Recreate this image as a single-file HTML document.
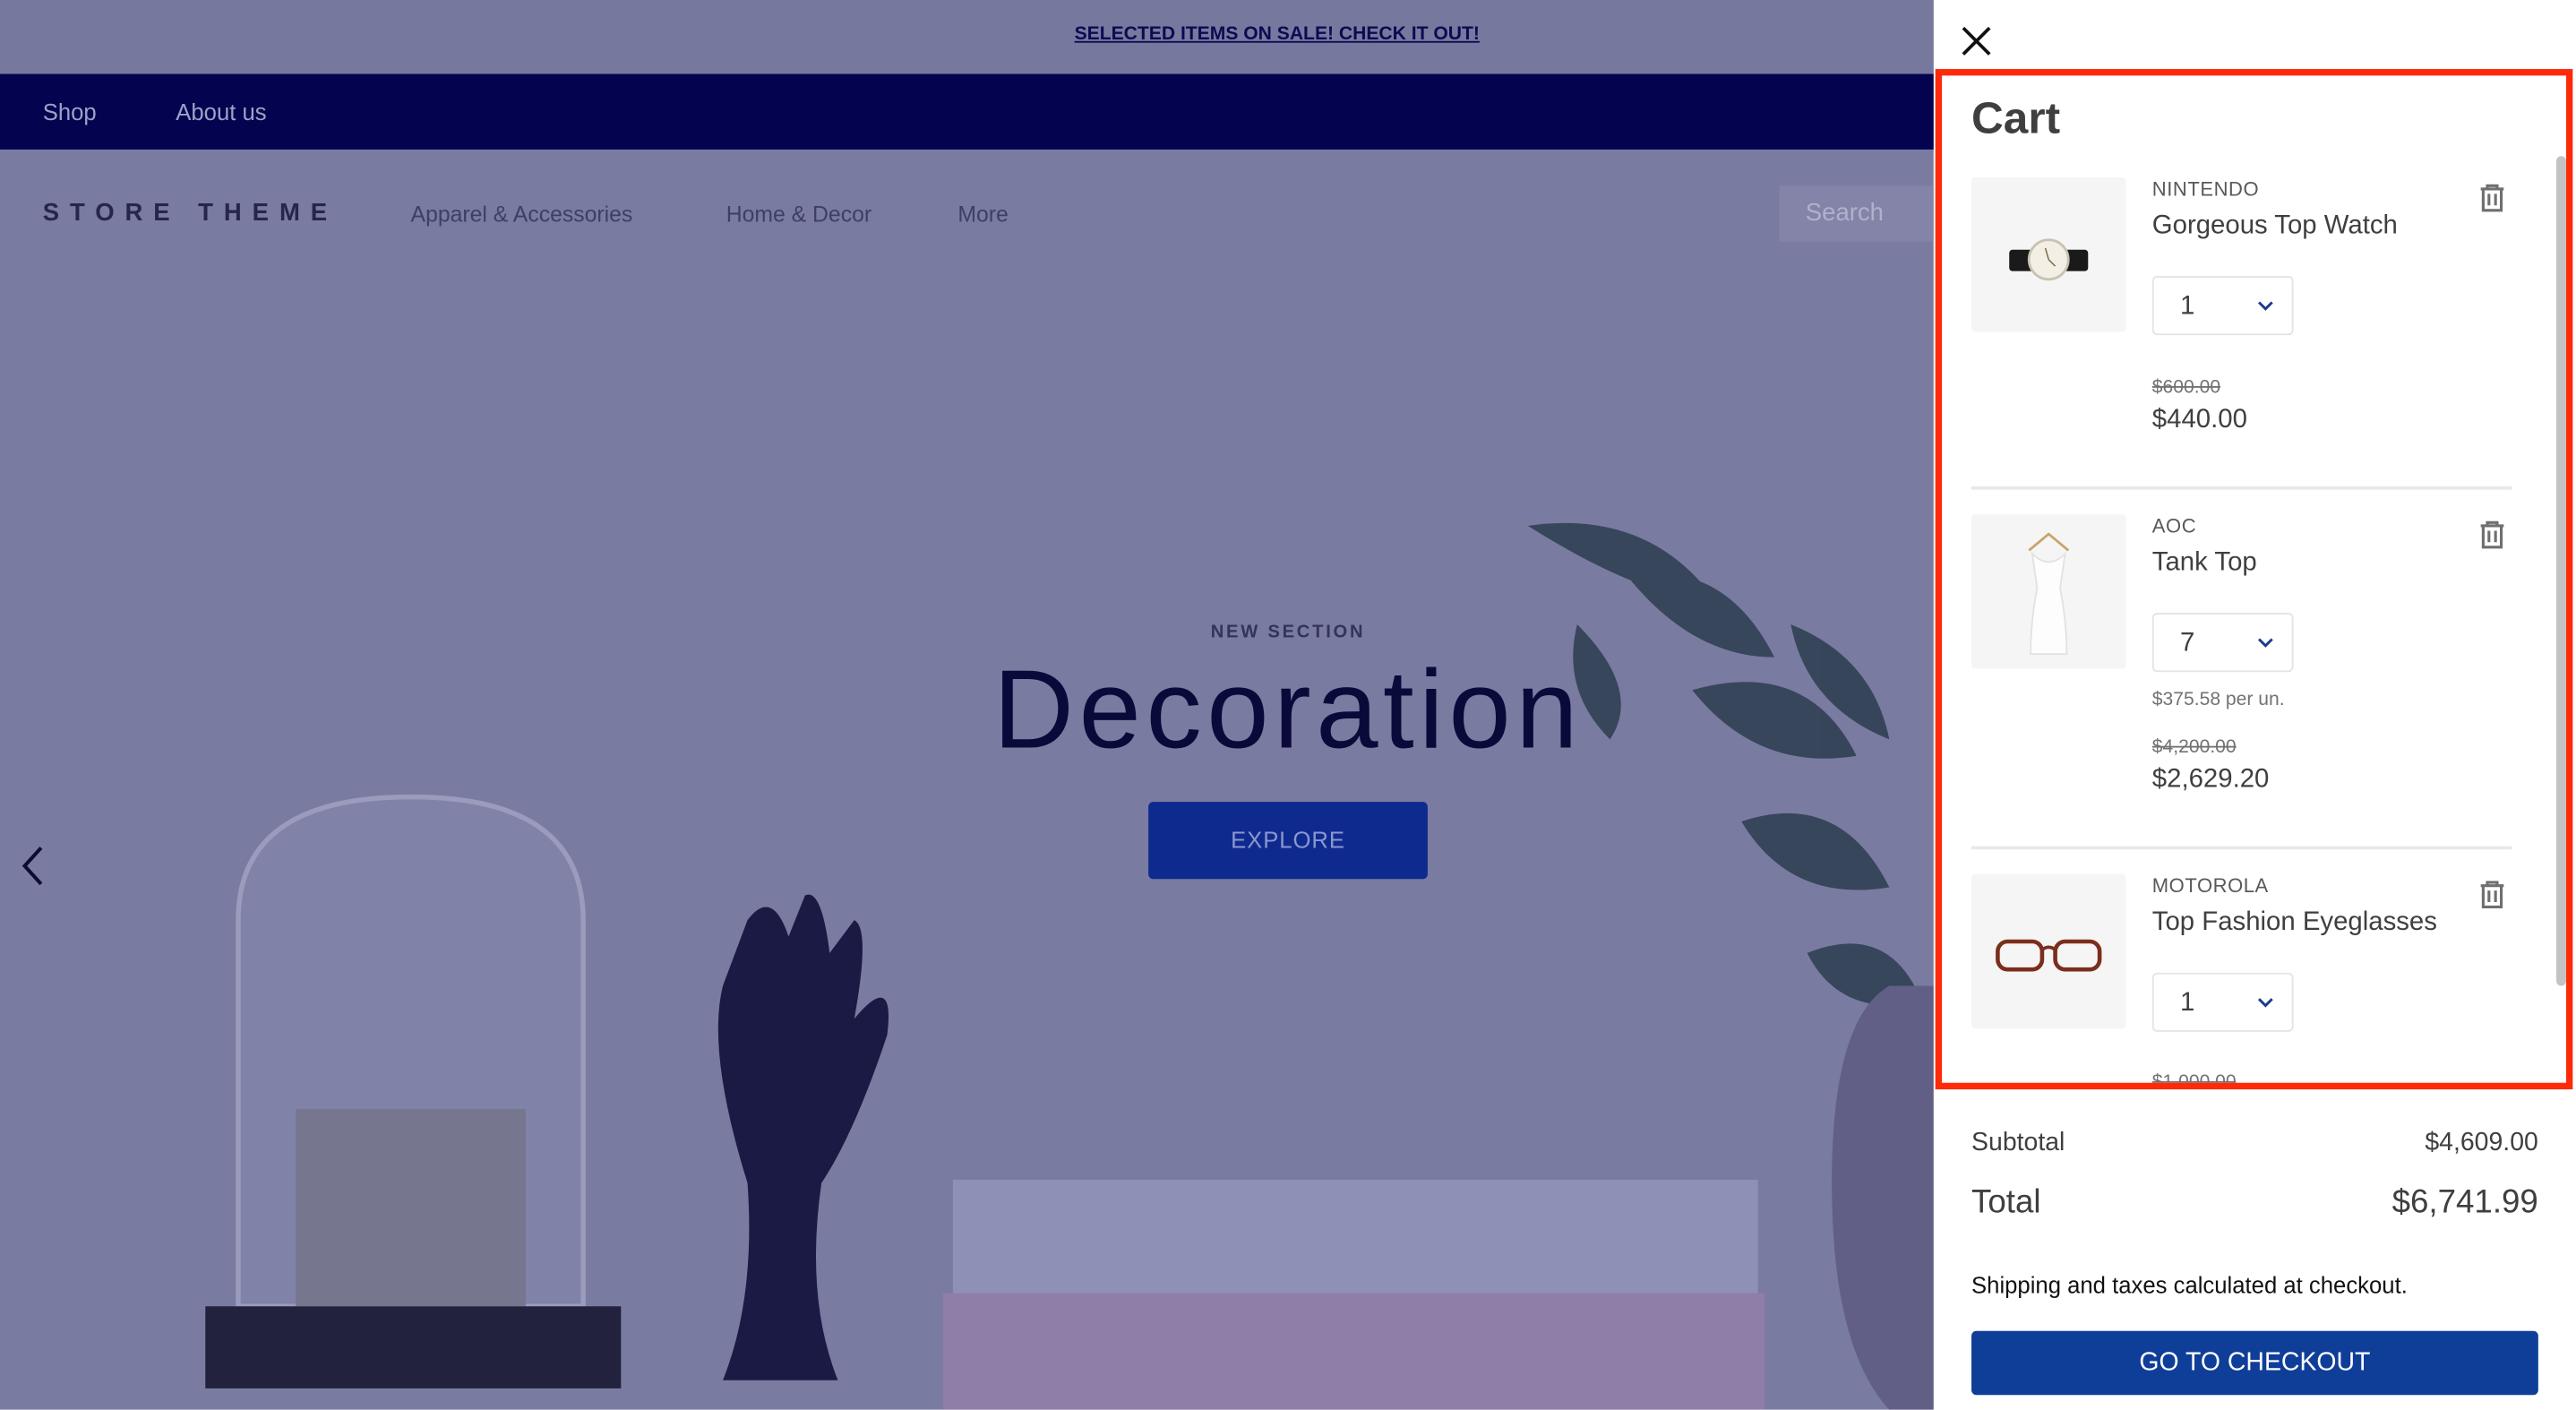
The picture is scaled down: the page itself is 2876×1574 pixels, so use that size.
<!DOCTYPE html>
<html><head><meta charset="utf-8"><style>
html,body{margin:0;padding:0;width:2876px;height:1574px;overflow:hidden;background:#fff}
#w{width:1568px;height:858px;transform:scale(1.8342);transform-origin:0 0;position:relative;font-family:"Liberation Sans",sans-serif;overflow:hidden}
.a{position:absolute}
.cart{color:#3f3f40}
.brand{font-size:12px;color:#595959;letter-spacing:.3px}
.name{font-size:16px;color:#3f3f40}
.qty{width:86px;height:36px;border:1.5px solid #e3e4e6;border-radius:3px;box-sizing:border-box;font-size:16px;color:#3f3f40}
.thumb{width:94px;height:94px;background:#f5f5f5;border-radius:2px}
.old{font-size:11.5px;color:#727273;text-decoration:line-through}
.price{font-size:16px;color:#3f3f40}
</style></head><body><div id="w">
<div class="a" style="left:0;top:0;width:1177px;height:858px;background:#7a7ba1"></div>
<div class="a" style="left:0;top:0;width:1177px;height:45px;background:#77789e"></div>
<div class="a" style="left:654px;top:15px;font-size:11.5px;font-weight:bold;color:#0b0b52;text-decoration:underline">SELECTED ITEMS ON SALE! CHECK IT OUT!</div>
<div class="a" style="left:0;top:45px;width:1177px;height:46px;background:#03034f"></div>
<div class="a" style="left:26px;top:60px;font-size:14px;color:#9fa0c6">Shop</div>
<div class="a" style="left:107px;top:60px;font-size:14px;color:#9fa0c6">About us</div>
<div class="a" style="left:26px;top:121px;font-size:15px;font-weight:bold;letter-spacing:6.5px;color:#26264a">STORE THEME</div>
<div class="a" style="left:250px;top:123px;font-size:13.5px;color:#3e3f66">Apparel &amp; Accessories</div>
<div class="a" style="left:442px;top:123px;font-size:13.5px;color:#3e3f66">Home &amp; Decor</div>
<div class="a" style="left:583px;top:123px;font-size:13.5px;color:#3e3f66">More</div>
<div class="a" style="left:1083px;top:113px;width:94px;height:34px;background:#8384a8"></div>
<div class="a" style="left:1099px;top:121px;font-size:15px;color:#b0b1cc">Search</div>
<svg class="a" style="left:0;top:280px" width="1177" height="578" viewBox="0 280 1177 578">
<g fill="#2c3d4f" opacity=".85">
<path d="M930 320 Q1000 310 1040 360 Q1010 370 930 320Z"/><path d="M990 350 Q1050 340 1080 400 Q1030 400 990 350Z"/>
<path d="M1030 420 Q1100 400 1130 460 Q1070 470 1030 420Z"/><path d="M1060 500 Q1120 480 1150 540 Q1090 550 1060 500Z"/>
<path d="M1100 580 Q1150 560 1170 610 Q1120 620 1100 580Z"/><path d="M960 380 Q1000 420 980 450 Q950 420 960 380Z"/>
<path d="M1090 380 Q1140 400 1150 450 Q1100 430 1090 380Z"/>
</g>
<path d="M1150 600 Q1115 620 1115 720 Q1115 820 1150 858 L1177 858 L1177 600Z" fill="#615f86"/>
<rect x="580" y="718" width="490" height="75" fill="#8e91b5"/>
<rect x="574" y="787" width="500" height="71" fill="#8f7ea8"/>
<path d="M145 560 Q145 485 250 485 Q355 485 355 560 L355 795 L145 795Z" fill="#8182a8" stroke="#9a9bbd" stroke-width="3"/>
<rect x="180" y="675" width="140" height="120" fill="#76778f"/>
<path d="M125 795 L378 795 L378 845 L125 845Z" fill="#22223f"/>
<path d="M455 560 Q470 540 480 570 L490 545 Q500 540 505 580 L520 560 Q530 565 520 620 Q545 590 540 630 Q520 690 500 720 Q490 790 510 840 L440 840 Q460 790 455 720 Q430 640 440 600Z" fill="#1a1a45"/>
</svg>
<div class="a" style="left:600px;top:379px;width:368px;text-align:center;font-size:11px;font-weight:bold;letter-spacing:1.5px;color:#33345a">NEW SECTION</div>
<div class="a" style="left:540px;top:393px;width:488px;text-align:center;font-size:68px;color:#0a0a3a;letter-spacing:3px">Decoration</div>
<div class="a" style="left:699px;top:488px;width:170px;height:47px;background:#0f2a8f;border-radius:3px;color:#8c97cf;font-size:14px;text-align:center;line-height:47px;letter-spacing:.5px">EXPLORE</div>
<svg class="a" style="left:10px;top:514px" width="20" height="26"><path d="M15 2 L5 13 L15 24" fill="none" stroke="#0c0c30" stroke-width="2.2"/></svg>
<div class="a cart" style="left:1177px;top:0;width:391px;height:858px;background:#fff">
<svg class="a" style="left:17px;top:16px" width="18" height="18"><path d="M1 1L17 17M17 1L1 17" stroke="#111" stroke-width="2"/></svg>
<div class="a" style="left:23px;top:57px;font-size:27px;font-weight:bold;color:#3f3f40">Cart</div>
<div class="a" style="left:379px;top:95px;width:6px;height:505px;background:#c3c3c3;border-radius:3px"></div>
<div class="a thumb" style="left:23px;top:108px"><svg width="94" height="94"><rect x="23" y="44" width="48" height="13" rx="2" fill="#1a1a1a"/><circle cx="47" cy="50" r="12" fill="#f3efe4" stroke="#c8c2b4" stroke-width="1.5"/><path d="M47 50 L45 43 M47 50 L51 54" stroke="#7a6a4a" stroke-width=".8"/></svg></div>
<div class="a brand" style="left:133px;top:108px">NINTENDO</div>
<div class="a name" style="left:133px;top:129px">Gorgeous Top Watch</div>
<svg class="a" style="left:331px;top:112px" width="18" height="17"><path d="M2 3h14M6 3V1h6v2M3.5 3v13h11V3M7 6v7M11 6v7" fill="none" stroke="#6f6f70" stroke-width="1.7"/></svg>
<div class="a qty" style="left:133px;top:168px"><span class="a" style="left:16px;top:9px">1</span><svg class="a" style="left:63px;top:13px" width="10" height="8"><path d="M1 2l4 4 4-4" fill="none" stroke="#1b3a8c" stroke-width="1.6"/></svg></div>
<div class="a old" style="left:133px;top:230px">$600.00</div>
<div class="a price" style="left:133px;top:247px">$440.00</div>
<div class="a" style="left:23px;top:296px;width:329px;height:1.5px;background:#e8e8e8"></div>
<div class="a thumb" style="left:23px;top:313px"><svg width="94" height="94"><path d="M35 22 L47 12 L59 22" fill="none" stroke="#c9a46a" stroke-width="1.5"/><path d="M37 24 L40 45 Q36 65 36 85 L58 85 Q58 65 54 45 L57 24 Q47 34 37 24Z" fill="#fdfdfd" stroke="#e2e2e2"/></svg></div>
<div class="a brand" style="left:133px;top:313px">AOC</div>
<div class="a name" style="left:133px;top:334px">Tank Top</div>
<svg class="a" style="left:331px;top:317px" width="18" height="17"><path d="M2 3h14M6 3V1h6v2M3.5 3v13h11V3M7 6v7M11 6v7" fill="none" stroke="#6f6f70" stroke-width="1.7"/></svg>
<div class="a qty" style="left:133px;top:373px"><span class="a" style="left:16px;top:9px">7</span><svg class="a" style="left:63px;top:13px" width="10" height="8"><path d="M1 2l4 4 4-4" fill="none" stroke="#1b3a8c" stroke-width="1.6"/></svg></div>
<div class="a" style="left:133px;top:420px;font-size:11.5px;color:#727273">$375.58 per un.</div>
<div class="a old" style="left:133px;top:449px">$4,200.00</div>
<div class="a price" style="left:133px;top:466px">$2,629.20</div>
<div class="a" style="left:23px;top:515px;width:329px;height:1.5px;background:#e8e8e8"></div>
<div class="a thumb" style="left:23px;top:532px"><svg width="94" height="94"><rect x="16" y="41" width="27" height="17" rx="6" fill="none" stroke="#7a2e1c" stroke-width="2.5"/><rect x="51" y="41" width="27" height="17" rx="6" fill="none" stroke="#7a2e1c" stroke-width="2.5"/><path d="M43 46 Q47 43 51 46" fill="none" stroke="#7a2e1c" stroke-width="2"/></svg></div>
<div class="a brand" style="left:133px;top:532px">MOTOROLA</div>
<div class="a name" style="left:133px;top:553px">Top Fashion Eyeglasses</div>
<svg class="a" style="left:331px;top:536px" width="18" height="17"><path d="M2 3h14M6 3V1h6v2M3.5 3v13h11V3M7 6v7M11 6v7" fill="none" stroke="#6f6f70" stroke-width="1.7"/></svg>
<div class="a qty" style="left:133px;top:592px"><span class="a" style="left:16px;top:9px">1</span><svg class="a" style="left:63px;top:13px" width="10" height="8"><path d="M1 2l4 4 4-4" fill="none" stroke="#1b3a8c" stroke-width="1.6"/></svg></div>
<div class="a old" style="left:133px;top:653px;height:6px;overflow:hidden">$1,000.00</div>
<div class="a" style="left:1px;top:42px;width:388px;height:621px;border:4px solid #fe2a0a;box-sizing:border-box"></div>
<div class="a" style="left:23px;top:687px;font-size:15.5px">Subtotal</div>
<div class="a" style="right:23px;top:687px;font-size:15.5px">$4,609.00</div>
<div class="a" style="left:23px;top:721px;font-size:20px">Total</div>
<div class="a" style="right:23px;top:721px;font-size:20px">$6,741.99</div>
<div class="a" style="left:23px;top:774px;font-size:14px;color:#111">Shipping and taxes calculated at checkout.</div>
<div class="a" style="left:23px;top:810px;width:345px;height:39px;background:#0f3e99;border-radius:3px;color:#fff;text-align:center;line-height:39px;font-size:15.5px">GO TO CHECKOUT</div>
</div>
</div></body></html>
